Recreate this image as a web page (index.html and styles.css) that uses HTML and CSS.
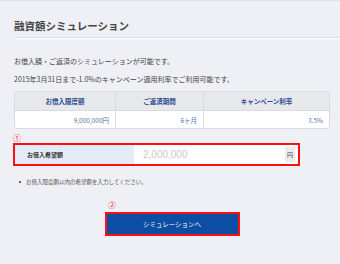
FILE: index.html
```html
<!DOCTYPE html>
<html lang="ja">

<head>
  <meta charset="UTF-8">
  <meta name="viewport" content="width=device-width, initial-scale=1.0">
  <title>融資額シミュレーション</title>
  <link rel="stylesheet" href="styles.css">
</head>

<body>
  <div class="page">
    <h1 class="title">融資額シミュレーション</h1>

    <p class="lead">お借入額・ご返済のシミュレーションが可能です。</p>
    <p class="lead second">2015年3月31日まで-1.0%のキャンペーン適用利率でご利用可能です。</p>

    <table class="limits">
      <tr>
        <th class="col1">お借入限度額</th>
        <th class="col2">ご返済期間</th>
        <th class="col3">キャンペーン利率</th>
      </tr>
      <tr>
        <td>9,000,000円</td>
        <td>6ヶ月</td>
        <td>3.5%</td>
      </tr>
    </table>

    <div class="mark">①</div>
    <div class="amount_box">
      <label class="amount_label" for="amount">お借入希望額</label>
      <input class="amount_input" type="text" id="amount" placeholder="2,000,000">
      <span class="unit">円</span>
    </div>

    <ul class="notes">
      <li>お借入限度額以内の希望額を入力してください。</li>
    </ul>

    <div class="btn_area">
      <div class="mark mark2">②</div>
      <button class="sim_btn" type="button">シミュレーションへ</button>
    </div>
  </div>
</body>

</html>
```

FILE: styles.css
```css
body {
  margin: 0;
  padding: 0;
  background-color: #eff0f5;
  font-family: "Noto Sans CJK JP", "Noto Sans", sans-serif;
  color: #333;
  border-top: 1px solid #e2e2e2;
}

.page {
  padding: 0 10px 0 14px;
}

.title {
  margin: 0 -10px 0 0;
  padding: 18px 0 4px 0;
  font-size: 10.5px;
  line-height: 14px;
  font-weight: bold;
  color: #444;
  border-bottom: 1px solid #dcdde2;
  box-shadow: 0 1px 0 #fff;
}

.lead {
  margin: 0;
  padding-top: 18px;
  font-size: 7px;
  line-height: 10px;
  color: #444;
}

.lead.second {
  padding-top: 8px;
}

.limits {
  margin-top: 7px;
  width: 316px;
  border-collapse: separate;
  border-spacing: 0;
  border: 1px solid #dadbe0;
  border-radius: 3px;
  background: #fff;
  font-size: 6.5px;
}

.limits th {
  height: 18px;
  padding: 0;
  background: #e7e8ec;
  color: #2b4c8e;
  font-weight: bold;
  border-bottom: 1px solid #dadbe0;
}

.limits td {
  height: 17px;
  padding: 0 6px 0 0;
  text-align: right;
  color: #5876ad;
}

.limits th + th,
.limits td + td {
  border-left: 1px solid #dadbe0;
}

.col1 {
  width: 100px;
}

.col2 {
  width: 87px;
}

.mark {
  margin: 4px 0 0 -1px;
  height: 9px;
  font-size: 8px;
  line-height: 9px;
  color: #ee1c1c;
}

.amount_box {
  margin: 1px 0 0 -1px;
  width: 283px;
  height: 19px;
  display: flex;
  align-items: stretch;
  border: 2px solid #ff1010;
  background: #fff;
}

.amount_label {
  width: 107px;
  padding-left: 12px;
  display: flex;
  align-items: center;
  background: #e3ecf6;
  font-size: 6px;
  font-weight: bold;
  color: #333;
}

.amount_input {
  flex: 1;
  min-width: 0;
  border: none;
  padding: 0 0 0 9px;
  font-family: "Liberation Sans", sans-serif;
  font-size: 10px;
  color: #333;
  background: #fff;
}

.amount_input::placeholder {
  color: #c8c8c8;
}

.unit {
  width: 10px;
  margin: 2px 3px 2px 0;
  display: flex;
  align-items: center;
  justify-content: center;
  background: #ececec;
  font-size: 6px;
  color: #444;
}

.notes {
  margin: 12px 0 0 0;
  padding-left: 5px;
  list-style: none;
  font-size: 5.5px;
  line-height: 8px;
  color: #555;
}

.notes li::before {
  content: "";
  display: inline-block;
  width: 2px;
  height: 2px;
  margin: 0 5px 1px 0;
  background: #666;
  vertical-align: middle;
}

.btn_area {
  margin-top: 14px;
  display: flex;
  flex-direction: column;
  align-items: center;
}

.mark2 {
  align-self: flex-start;
  margin: 0 0 3px 94px;
}

.sim_btn {
  width: 135px;
  height: 24px;
  border: 2px solid #ff1010;
  background: #0c4ea3;
  color: #fff;
  font-family: "Noto Sans CJK JP", sans-serif;
  font-size: 6.5px;
  padding: 0;
}
```
